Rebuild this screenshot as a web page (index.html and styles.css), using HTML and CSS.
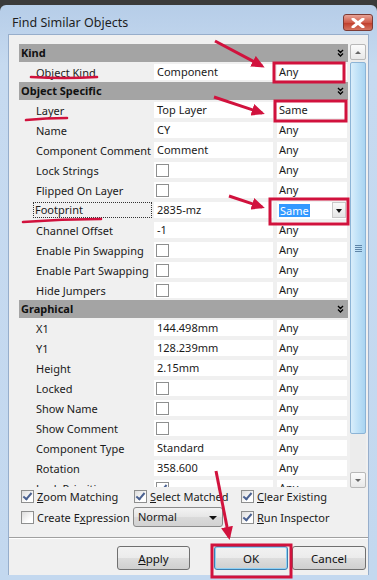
FILE: index.html
```html
<!DOCTYPE html>
<html>
<head>
  <title>Find Similar Objects</title>
  <link rel="stylesheet" href="styles.css">
</head>
<body>

<div class="window">
  <div class="titlebar">
    <span class="title">Find Similar Objects</span>
    <div class="close">
      <svg width="14" height="10" viewBox="0 0 14 10"><path d="M2 1 L12 9 M12 1 L2 9" stroke="#fff" stroke-width="3" stroke-linecap="round"/></svg>
    </div>
  </div>

  <div class="client">
    <div class="main">
      <div class="grid">
        <div class="head">Kind<span class="chev"></span></div>
        <div class="row"><span class="label">Object Kind</span><span class="val">Component</span><span class="any">Any</span></div>

        <div class="head">Object Specific<span class="chev"></span></div>
        <div class="row"><span class="label">Layer</span><span class="val">Top Layer</span><span class="any">Same</span></div>
        <div class="row"><span class="label">Name</span><span class="val">CY</span><span class="any">Any</span></div>
        <div class="row"><span class="label">Component Comment</span><span class="val">Comment</span><span class="any">Any</span></div>
        <div class="row"><span class="label">Lock Strings</span><span class="val"><i class="box"></i></span><span class="any">Any</span></div>
        <div class="row"><span class="label">Flipped On Layer</span><span class="val"><i class="box"></i></span><span class="any">Any</span></div>
        <div class="row"><span class="label"><b class="focus">Footprint</b></span><span class="val">2835-mz</span>
          <span class="any combo"><em class="sel">Same</em><span class="drop"></span></span></div>
        <div class="row"><span class="label">Channel Offset</span><span class="val">-1</span><span class="any">Any</span></div>
        <div class="row"><span class="label">Enable Pin Swapping</span><span class="val"><i class="box"></i></span><span class="any">Any</span></div>
        <div class="row"><span class="label">Enable Part Swapping</span><span class="val"><i class="box"></i></span><span class="any">Any</span></div>
        <div class="row"><span class="label">Hide Jumpers</span><span class="val"><i class="box"></i></span><span class="any">Any</span></div>

        <div class="head">Graphical<span class="chev"></span></div>
        <div class="row"><span class="label">X1</span><span class="val">144.498mm</span><span class="any">Any</span></div>
        <div class="row"><span class="label">Y1</span><span class="val">128.239mm</span><span class="any">Any</span></div>
        <div class="row"><span class="label">Height</span><span class="val">2.15mm</span><span class="any">Any</span></div>
        <div class="row"><span class="label">Locked</span><span class="val"><i class="box"></i></span><span class="any">Any</span></div>
        <div class="row"><span class="label">Show Name</span><span class="val"><i class="box"></i></span><span class="any">Any</span></div>
        <div class="row"><span class="label">Show Comment</span><span class="val"><i class="box"></i></span><span class="any">Any</span></div>
        <div class="row"><span class="label">Component Type</span><span class="val">Standard</span><span class="any">Any</span></div>
        <div class="row"><span class="label">Rotation</span><span class="val">358.600</span><span class="any">Any</span></div>
        <div class="row"><span class="label">Lock Primitives</span><span class="val"><i class="box checked"></i></span><span class="any">Any</span></div>
      </div>

      <div class="scrollbar">
        <div class="sb-btn up"></div>
        <div class="thumb"><span class="grip"></span></div>
        <div class="track"></div>
        <div class="sb-btn down"></div>
      </div>
    </div>

    <div class="options">
      <label class="opt"><i class="box checked"></i><span><u>Z</u>oom Matching</span></label>
      <label class="opt"><i class="box checked"></i><span><u>S</u>elect Matched</span></label>
      <label class="opt"><i class="box checked"></i><span><u>C</u>lear Existing</span></label>
      <label class="opt"><i class="box"></i><span>Create E<u>x</u>pression</span></label>
      <div class="opt"><span class="select">Normal</span></div>
      <label class="opt"><i class="box checked"></i><span><u>R</u>un Inspector</span></label>
    </div>

    <div class="sep"></div>

    <div class="buttons">
      <button class="btn apply"><u>A</u>pply</button>
      <button class="btn ok">OK</button>
      <button class="btn cancel">Cancel</button>
    </div>
  </div>
</div>

<!-- annotations drawn over the screenshot -->
<svg class="marks" width="377" height="580" viewBox="0 0 377 580">
  <defs>
    <marker id="head" markerWidth="4.4" markerHeight="4" refX="3.4" refY="2" orient="auto" markerUnits="strokeWidth">
      <path d="M0,0 L4.4,2 L0,4 z" fill="#d1123d"/>
    </marker>
  </defs>
  <g fill="none" stroke="#d1123d" stroke-width="3">
    <rect x="274" y="63" width="70" height="19"/>
    <rect x="275" y="101" width="71" height="20"/>
    <rect x="270" y="199" width="78" height="25"/>
    <rect x="212" y="545" width="79" height="32"/>
  </g>
  <g fill="none" stroke="#d1123d" stroke-width="2.6" stroke-linecap="round">
    <path d="M31 77 Q64 79 97 77"/>
    <path d="M26 120 Q46 118 67 118"/>
    <path d="M23 222 Q62 219 101 219"/>
  </g>
  <g stroke="#d1123d" stroke-width="3" marker-end="url(#head)">
    <line x1="215" y1="41" x2="262" y2="66"/>
    <line x1="214" y1="97" x2="262" y2="113"/>
    <line x1="229" y1="196" x2="262" y2="207"/>
    <line x1="216" y1="471" x2="229" y2="537"/>
  </g>
</svg>

</body>
</html>
```

FILE: styles.css
```css
body {
  margin: 0;
  background: #3a3a3a;
  font-family: "Noto Sans", "Open Sans", sans-serif;
  font-size: 11px;
  color: #1a1a1a;
}

.window {
  margin-top: 5px;
  height: 575px;
  background: linear-gradient(#b6cde8, #c6daf0 60px, #c3d8ef);
  border-radius: 6px 6px 0 0;
  position: relative;
}

.titlebar {
  height: 29px;
  display: flex;
  justify-content: space-between;
}

.title {
  padding: 9px 0 0 12px;
  font-size: 12.5px;
  color: #1e1e1e;
}

.close {
  margin: 9px 4px 0 0;
  width: 30px;
  height: 17px;
  box-sizing: border-box;
  border: 1px solid #7d3a34;
  border-radius: 3px;
  background: linear-gradient(#e8a397, #cf5b49 50%, #bf3b29 51%, #d4735f);
  display: flex;
  align-items: center;
  justify-content: center;
}

.client {
  margin: 0 8px;
  height: 541px;
  background: #f0f0f0;
  border: 1px solid #97aecb;
  border-bottom: none;
  box-sizing: border-box;
  padding-top: 9px;
}

.main {
  display: flex;
  gap: 2px;
  height: 444px;
  padding-left: 10px;
}

.grid {
  width: 329px;
  height: 443px;
  overflow: hidden;
}

.head {
  height: 18px;
  line-height: 18px;
  background: #a4a4a4;
  font-weight: bold;
  padding-left: 2px;
  display: flex;
  justify-content: space-between;
  color: #111;
}

.chev {
  width: 7px;
  height: 8px;
  margin: 5px 4px 0 0;
  background: url("data:image/svg+xml,%3Csvg xmlns='http://www.w3.org/2000/svg' width='7' height='8'%3E%3Cpath d='M1 1 L3.5 3.5 L6 1 M1 4.5 L3.5 7 L6 4.5' stroke='black' stroke-width='1.4' fill='none'/%3E%3C/svg%3E") no-repeat;
}

.row {
  height: 20px;
  display: flex;
  align-items: center;
}

.label {
  width: 118px;
  padding-left: 17px;
  white-space: nowrap;
}

.val, .any {
  height: 16px;
  line-height: 16px;
  background: #fff;
  white-space: nowrap;
  display: flex;
  align-items: center;
}

.val {
  width: 116px;
  padding-left: 3px;
}

.any {
  width: 68px;
  margin-left: 4px;
  padding-left: 2px;
}

.focus {
  font-weight: normal;
  display: inline-block;
  width: 117px;
  margin-left: -3px;
  padding-left: 2px;
  height: 16px;
  line-height: 16px;
  outline: 1px dotted #333;
  outline-offset: -1px;
}

.combo {
  position: relative;
  height: 17px;
}

.sel {
  font-style: normal;
  background: #3399ff;
  color: #fff;
  padding: 0 1px;
  line-height: 13px;
}

.drop {
  position: absolute;
  right: 1px;
  top: 0;
  width: 14px;
  height: 16px;
  box-sizing: border-box;
  border: 1px solid #c9c9c9;
  background: linear-gradient(#fafafa, #e6e6e6);
}

.drop::after {
  content: "";
  position: absolute;
  left: 3px;
  top: 6px;
  border: 3.5px solid transparent;
  border-top: 4px solid #111;
}

.box {
  display: inline-block;
  width: 13px;
  height: 13px;
  box-sizing: border-box;
  border: 1px solid #8e8f8f;
  background: linear-gradient(135deg, #dcdcdc, #fff 70%);
  margin-left: -1px;
  position: relative;
  flex: none;
}

.val .box {
  background: #fff;
  margin-top: 1px;
}

.box.checked::after {
  content: "";
  position: absolute;
  left: 3px;
  top: 0px;
  width: 3px;
  height: 7px;
  border: solid #4a6191;
  border-width: 0 2px 2px 0;
  transform: rotate(40deg);
}

.scrollbar {
  width: 16px;
  display: flex;
  flex-direction: column;
  gap: 2px;
  background: #ececec;
}

.sb-btn {
  height: 16px;
  box-sizing: border-box;
  border: 1px solid #b8b8b8;
  border-radius: 2px;
  background: linear-gradient(#fbfbfb, #e8e8e8);
  position: relative;
  flex: none;
}

.sb-btn::after {
  content: "";
  position: absolute;
  left: 4px;
  border: 3px solid transparent;
}

.sb-btn.up::after {
  top: 3px;
  border-bottom: 3px solid #666;
}

.sb-btn.down::after {
  top: 6px;
  border-top: 3px solid #666;
}

.thumb {
  height: 372px;
  box-sizing: border-box;
  border: 1px solid #8cb4d6;
  border-radius: 2px;
  background: linear-gradient(90deg, #d9eefb, #bfe1f7 50%, #a9d4f1);
  display: flex;
  align-items: center;
  justify-content: center;
  flex: none;
}

.grip {
  width: 7px;
  height: 7px;
  background: repeating-linear-gradient(#5f85a8 0 1px, transparent 1px 2px);
}

.track {
  flex: 1;
}

.options {
  display: grid;
  grid-template-columns: 113px 107px 1fr;
  grid-template-rows: 17px 22px;
  row-gap: 1px;
  padding: 0 0 0 11px;
}

.opt {
  display: flex;
  align-items: center;
  gap: 3px;
  white-space: nowrap;
  font-size: 11px;
}

.opt .box {
  margin-left: 1px;
}

.select {
  width: 90px;
  height: 20px;
  box-sizing: border-box;
  border: 1px solid #8a8a8a;
  border-radius: 3px;
  background: linear-gradient(#f3f3f3, #e6e6e6 50%, #dadada 51%, #d2d2d2);
  padding-left: 4px;
  line-height: 18px;
  position: relative;
}

.select::after {
  content: "";
  position: absolute;
  right: 5px;
  top: 8px;
  border: 4px solid transparent;
  border-top: 4px solid #111;
}

.sep {
  margin-top: 9px;
  height: 1px;
  background: #a0a0a0;
  border-bottom: 1px solid #fff;
}

.buttons {
  display: flex;
  padding: 7px 0 0 108px;
}

.btn {
  height: 24px;
  font-family: inherit;
  font-size: 11.5px;
  color: #111;
  border: 1px solid #707070;
  border-radius: 3px;
  background: linear-gradient(#f2f2f2, #ebebeb 50%, #dddddd 51%, #cfcfcf);
  padding: 0;
}

.apply {
  width: 73px;
}

.ok {
  width: 74px;
  margin-left: 24px;
  border-color: #3c7fb1;
  box-shadow: inset 0 0 0 1px #8fd0f3;
}

.cancel {
  width: 74px;
  margin-left: 4px;
}

.marks {
  position: absolute;
  left: 0;
  top: 0;
  pointer-events: none;
}
```
